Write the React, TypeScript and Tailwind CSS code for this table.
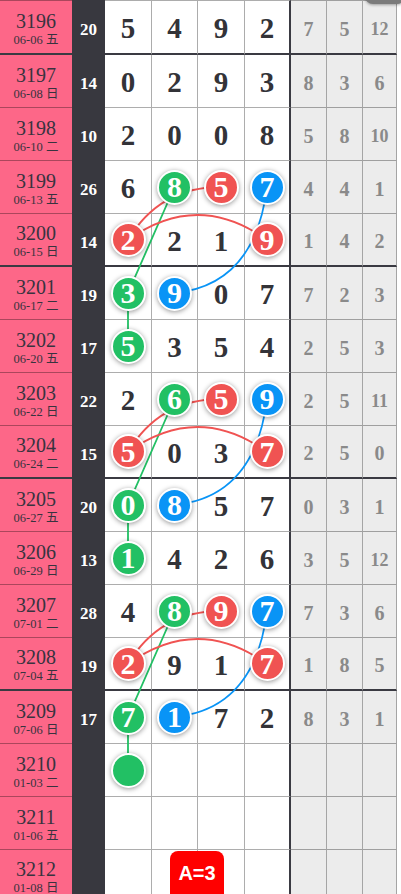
import React from 'react';

type Row = { id: string; date: string; sum?: number; d: string[]; g: number[]; thick?: boolean };

// d: plain digit "6", ball "g8" / "r5" / "b7", empty ball "g", empty cell ""
const rows: Row[] = [
  { id: '3196', date: '06-06 五', sum: 20, d: ['5', '4', '9', '2'], g: [7, 5, 12], thick: true },
  { id: '3197', date: '06-08 日', sum: 14, d: ['0', '2', '9', '3'], g: [8, 3, 6] },
  { id: '3198', date: '06-10 二', sum: 10, d: ['2', '0', '0', '8'], g: [5, 8, 10] },
  { id: '3199', date: '06-13 五', sum: 26, d: ['6', 'g8', 'r5', 'b7'], g: [4, 4, 1] },
  { id: '3200', date: '06-15 日', sum: 14, d: ['r2', '2', '1', 'r9'], g: [1, 4, 2], thick: true },
  { id: '3201', date: '06-17 二', sum: 19, d: ['g3', 'b9', '0', '7'], g: [7, 2, 3] },
  { id: '3202', date: '06-20 五', sum: 17, d: ['g5', '3', '5', '4'], g: [2, 5, 3] },
  { id: '3203', date: '06-22 日', sum: 22, d: ['2', 'g6', 'r5', 'b9'], g: [2, 5, 11] },
  { id: '3204', date: '06-24 二', sum: 15, d: ['r5', '0', '3', 'r7'], g: [2, 5, 0], thick: true },
  { id: '3205', date: '06-27 五', sum: 20, d: ['g0', 'b8', '5', '7'], g: [0, 3, 1] },
  { id: '3206', date: '06-29 日', sum: 13, d: ['g1', '4', '2', '6'], g: [3, 5, 12] },
  { id: '3207', date: '07-01 二', sum: 28, d: ['4', 'g8', 'r9', 'b7'], g: [7, 3, 6] },
  { id: '3208', date: '07-04 五', sum: 19, d: ['r2', '9', '1', 'r7'], g: [1, 8, 5], thick: true },
  { id: '3209', date: '07-06 日', sum: 17, d: ['g7', 'b1', '7', '2'], g: [8, 3, 1] },
  { id: '3210', date: '01-03 二', d: ['g', '', '', ''], g: [] },
  { id: '3211', date: '01-06 五', d: ['', '', '', ''], g: [] },
  { id: '3212', date: '01-08 日', d: ['', '', '', ''], g: [], thick: true },
];

const SERIF = { fontFamily: '"Liberation Serif", "Noto Sans CJK SC", serif' };

const digitW = ['w-[47px]', 'w-[46px]', 'w-[47px]', 'w-[46px]'];
const grayW = ['w-[36px]', 'w-[36px]', 'w-[34px]'];

// centers of the four digit columns and of each row, for the line overlay
const cx = [128, 174.5, 221, 267];
const cy = (i: number) => 28 + 53 * i;

function Ball({ v }: { v: string }) {
  const color =
    v[0] === 'g' ? 'bg-[#22c064]' : v[0] === 'r' ? 'bg-[#f05352]' : 'bg-[#0994f6]';
  return (
    <div
      className={`relative z-20 flex h-[35px] w-[35px] items-center justify-center rounded-full border-2 border-white ${color} shadow-[0_1px_5px_rgba(0,0,0,0.4)]`}
    >
      <span className="text-[30px] font-bold leading-none text-white">{v.slice(1)}</span>
    </div>
  );
}

function Lines() {
  const paths: { d: string; c: string }[] = [];
  [3, 7, 11].forEach((b) => {
    // green: col2 -> col1 two rows down -> straight below
    paths.push({ d: `M${cx[1]},${cy(b)} L${cx[0]},${cy(b + 2)} L${cx[0]},${cy(b + 3)}`, c: '#22c064' });
    // red: col3 -> col1 next row -> col4 next row
    paths.push({
      d: `M${cx[2]},${cy(b)} Q${cx[1] - 15},${cy(b)} ${cx[0]},${cy(b + 1)} Q${(cx[0] + cx[3]) / 2},${cy(b + 1) - 50} ${cx[3]},${cy(b + 1)}`,
      c: '#f05352',
    });
    // blue: col4 -> col2 two rows down
    paths.push({ d: `M${cx[3]},${cy(b)} Q${cx[3] - 12},${cy(b + 1) + 45} ${cx[1]},${cy(b + 2)}`, c: '#0994f6' });
  });
  return (
    <svg className="pointer-events-none absolute left-0 top-0 z-10" width="401" height="910">
      {paths.map((p, i) => (
        <path key={i} d={p.d} fill="none" stroke={p.c} strokeWidth="1.8" />
      ))}
    </svg>
  );
}

function TableRow({ r, first }: { r: Row; first: boolean }) {
  const bottom = r.thick ? 'border-b-2 border-b-[#3a3a42]' : 'border-b border-b-[rgba(0,0,0,0.32)]';
  const top = first ? 'border-t border-t-[rgba(0,0,0,0.32)]' : '';
  return (
    <div className={`flex ${first ? 'h-[55px]' : 'h-[53px]'}`}>
      <div className={`flex h-full w-[72px] flex-col items-center justify-center bg-[#fd6788] text-[#38333f] ${top} ${bottom}`}>
        <span className="text-[20px] leading-[26px]">{r.id}</span>
        <span className="text-[12.5px] leading-[13px]">{r.date}</span>
      </div>
      <div className="flex h-full w-[33px] items-center justify-center bg-[#38383f] pt-[5px]">
        <span className="text-[17px] font-bold text-white">{r.sum ?? ''}</span>
      </div>
      {r.d.map((v, i) => (
        <div
          key={i}
          className={`flex h-full ${digitW[i]} items-center justify-center bg-white ${top} ${bottom} ${
            i === 3 ? 'border-r-2 border-r-[#3a3a42]' : 'border-r border-r-[rgba(0,0,0,0.32)]'
          }`}
        >
          {v === '' ? null : /[grb]/.test(v[0]) ? (
            <Ball v={v} />
          ) : (
            <span className="pt-[3px] text-[29px] font-bold leading-none text-[#333338]">{v}</span>
          )}
        </div>
      ))}
      {[0, 1, 2].map((i) => (
        <div
          key={i}
          className={`flex h-full ${grayW[i]} items-center justify-center border-r border-r-[rgba(0,0,0,0.3)] bg-[#ececec] ${top} ${bottom}`}
        >
          <span
            className={`pt-[3px] font-bold leading-none text-[#8a8a8a] ${
              r.g[i] !== undefined && r.g[i] > 9 ? 'text-[18px]' : 'text-[20px]'
            }`}
          >
            {r.g[i] ?? ''}
          </span>
        </div>
      ))}
    </div>
  );
}

export default function App() {
  return (
    <div className="relative h-[894px] w-[401px] overflow-hidden bg-white" style={SERIF}>
      <div className="relative">
        {rows.map((r, i) => (
          <TableRow key={r.id} r={r} first={i === 0} />
        ))}
        <Lines />
      </div>

      {/* floating button peeking in at top right */}
      <div className="absolute right-[-4px] top-[-40px] z-30 h-[44px] w-[40px] rounded-[8px] bg-[#7b7b7b] shadow-[0_1px_3px_rgba(0,0,0,0.35)]" />

      {/* bottom badge */}
      <div
        className="absolute left-[170px] top-[851px] z-30 flex h-[60px] w-[54px] justify-center rounded-[8px] bg-[#ff0000] pt-[8px]"
        style={{ fontFamily: '"Liberation Sans", Arial, sans-serif' }}
      >
        <span className="text-[20px] font-bold leading-[28px] text-white">A=3</span>
      </div>
    </div>
  );
}
